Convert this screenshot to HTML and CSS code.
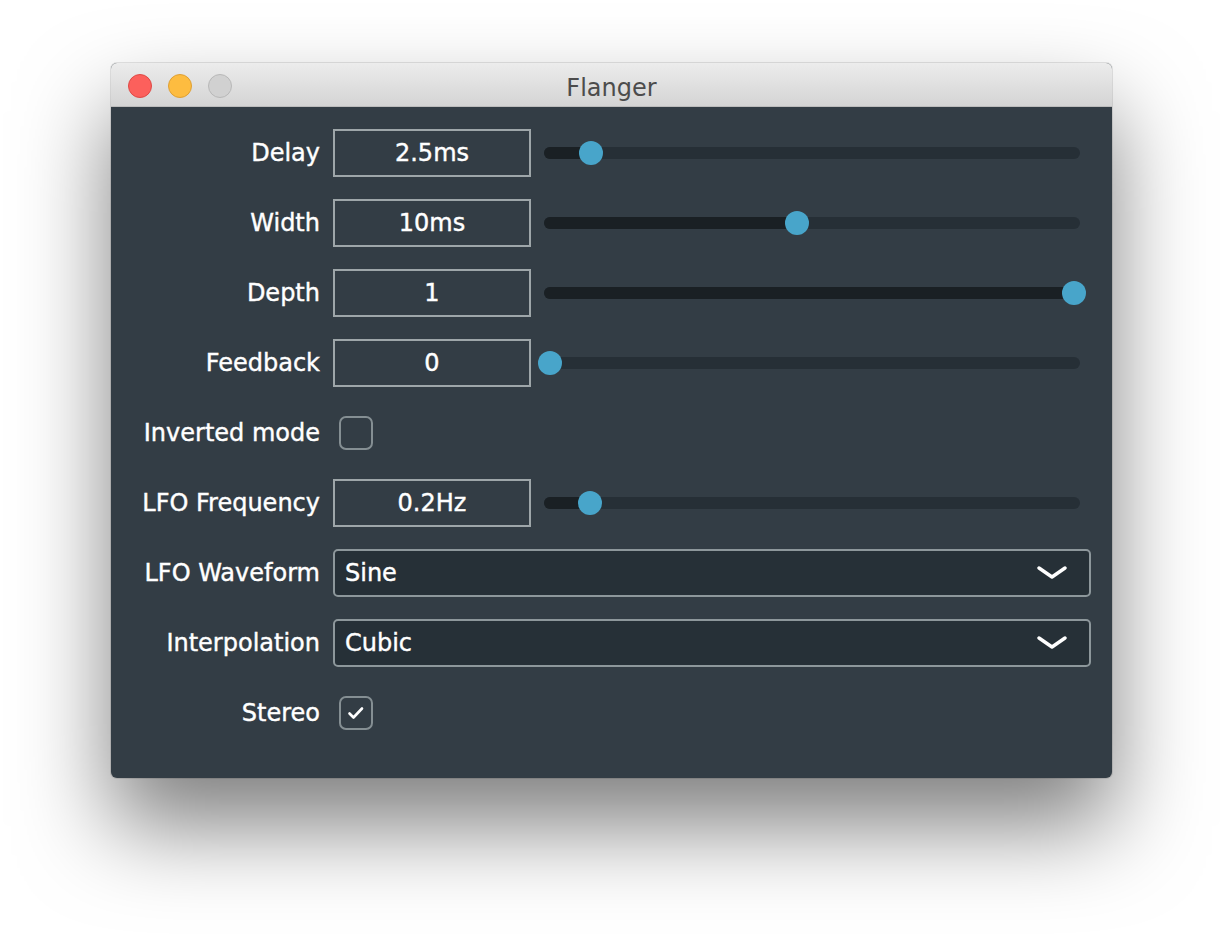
FILE: index.html
```html
<!DOCTYPE html>
<html lang="en">
<head>
  <link rel="stylesheet" href="styles.css">
  <title>Flanger</title>
</head>
<body>
  <div class="window">
    <div class="titlebar">
      <div class="lights">
        <span class="light close"></span>
        <span class="light min"></span>
        <span class="light max"></span>
      </div>
      <p class="title">Flanger</p>
    </div>

    <div class="panel">
      <label class="label">Delay</label>
      <div class="control">
        <div class="value">2.5ms</div>
        <div class="slider">
          <div class="track"><div class="fill" style="width: 47px"></div></div>
          <span class="thumb" style="left: 47px"></span>
        </div>
      </div>

      <label class="label">Width</label>
      <div class="control">
        <div class="value">10ms</div>
        <div class="slider">
          <div class="track"><div class="fill" style="width: 253px"></div></div>
          <span class="thumb" style="left: 253px"></span>
        </div>
      </div>

      <label class="label">Depth</label>
      <div class="control">
        <div class="value">1</div>
        <div class="slider">
          <div class="track"><div class="fill" style="width: 530px"></div></div>
          <span class="thumb" style="left: 530px"></span>
        </div>
      </div>

      <label class="label">Feedback</label>
      <div class="control">
        <div class="value">0</div>
        <div class="slider">
          <div class="track"><div class="fill" style="width: 6px"></div></div>
          <span class="thumb" style="left: 6px"></span>
        </div>
      </div>

      <label class="label">Inverted mode</label>
      <div class="control">
        <span class="checkbox"></span>
      </div>

      <label class="label">LFO Frequency</label>
      <div class="control">
        <div class="value">0.2Hz</div>
        <div class="slider">
          <div class="track"><div class="fill" style="width: 46px"></div></div>
          <span class="thumb" style="left: 46px"></span>
        </div>
      </div>

      <label class="label">LFO Waveform</label>
      <div class="control">
        <div class="select">
          <span>Sine</span>
          <svg class="chevron" width="30" height="14" viewBox="0 0 30 14">
            <path d="M2 2 L15 11 L28 2" fill="none" stroke="#ffffff" stroke-width="3.4" stroke-linecap="round" stroke-linejoin="round"/>
          </svg>
        </div>
      </div>

      <label class="label">Interpolation</label>
      <div class="control">
        <div class="select">
          <span>Cubic</span>
          <svg class="chevron" width="30" height="14" viewBox="0 0 30 14">
            <path d="M2 2 L15 11 L28 2" fill="none" stroke="#ffffff" stroke-width="3.4" stroke-linecap="round" stroke-linejoin="round"/>
          </svg>
        </div>
      </div>

      <label class="label">Stereo</label>
      <div class="control">
        <span class="checkbox">
          <svg width="18" height="14" viewBox="0 0 18 14">
            <path d="M2.5 7.5 L6.5 11.5 L15 2.5" fill="none" stroke="#ffffff" stroke-width="2.6" stroke-linecap="round" stroke-linejoin="round"/>
          </svg>
        </span>
      </div>
    </div>
  </div>
</body>
</html>
```

FILE: styles.css
```css
html {
  background-color: #ffffff;
}

body {
  margin: 0;
  min-height: 938px;
  padding: 63px 0 0 111px;
  box-sizing: border-box;
  font-family: "DejaVu Sans", Verdana, sans-serif;
}

.window {
  width: 1001px;
  border-radius: 6px;
  overflow: hidden;
  background-color: #333d45;
  box-shadow: 0 0 0 1px rgba(0, 0, 0, 0.1), 0 48px 90px rgba(0, 0, 0, 0.5);
}

.titlebar {
  height: 44px;
  display: flex;
  position: relative;
  background: linear-gradient(#ececec, #d4d4d4);
  border-bottom: 1px solid #bcbcbc;
  box-sizing: border-box;
}

.lights {
  display: flex;
  gap: 16px;
  padding: 11px 0 0 17px;
}

.light {
  width: 24px;
  height: 24px;
  border-radius: 50%;
  box-sizing: border-box;
}

.close {
  background-color: #fc605c;
  border: 1px solid #de4a46;
}

.min {
  background-color: #fdbc40;
  border: 1px solid #dea034;
}

.max {
  background-color: #d1d1d1;
  border: 1px solid #b8b8b8;
}

.title {
  position: absolute;
  left: 0;
  right: 0;
  top: 11px;
  margin: 0;
  text-align: center;
  font-size: 24px;
  color: #4c4c4c;
}

.panel {
  display: grid;
  grid-template-columns: 209px 1fr;
  grid-auto-rows: 48px;
  column-gap: 13px;
  row-gap: 22px;
  padding: 22px 21px 41px 0;
}

.label {
  display: flex;
  align-items: center;
  justify-content: flex-end;
  color: #ffffff;
  font-size: 24px;
  white-space: nowrap;
  -webkit-text-stroke: 0.4px #ffffff;
}

.control {
  display: flex;
  align-items: center;
  gap: 13px;
}

.value {
  width: 198px;
  height: 48px;
  box-sizing: border-box;
  border: 2px solid #9ea6a9;
  display: flex;
  align-items: center;
  justify-content: center;
  color: #ffffff;
  font-size: 24px;
  -webkit-text-stroke: 0.4px #ffffff;
}

.slider {
  position: relative;
  width: 536px;
  height: 24px;
  display: flex;
  align-items: center;
}

.track {
  width: 100%;
  height: 12px;
  border-radius: 6px;
  background-color: #262f36;
  overflow: hidden;
}

.fill {
  height: 100%;
  background-color: #1a2024;
}

.thumb {
  position: absolute;
  top: 0;
  width: 24px;
  height: 24px;
  margin-left: -12px;
  border-radius: 50%;
  background-color: #48a5ca;
}

.checkbox {
  width: 34px;
  height: 34px;
  margin-left: 6px;
  box-sizing: border-box;
  border: 2px solid #858f93;
  border-radius: 7px;
  display: flex;
  align-items: center;
  justify-content: center;
}

.select {
  flex: 1;
  height: 48px;
  box-sizing: border-box;
  border: 2px solid #8d979b;
  border-radius: 5px;
  background-color: #263037;
  display: flex;
  align-items: center;
  justify-content: space-between;
  padding: 0 22px 0 10px;
  color: #ffffff;
  font-size: 24px;
  -webkit-text-stroke: 0.4px #ffffff;
}

.chevron {
  display: block;
}
```
